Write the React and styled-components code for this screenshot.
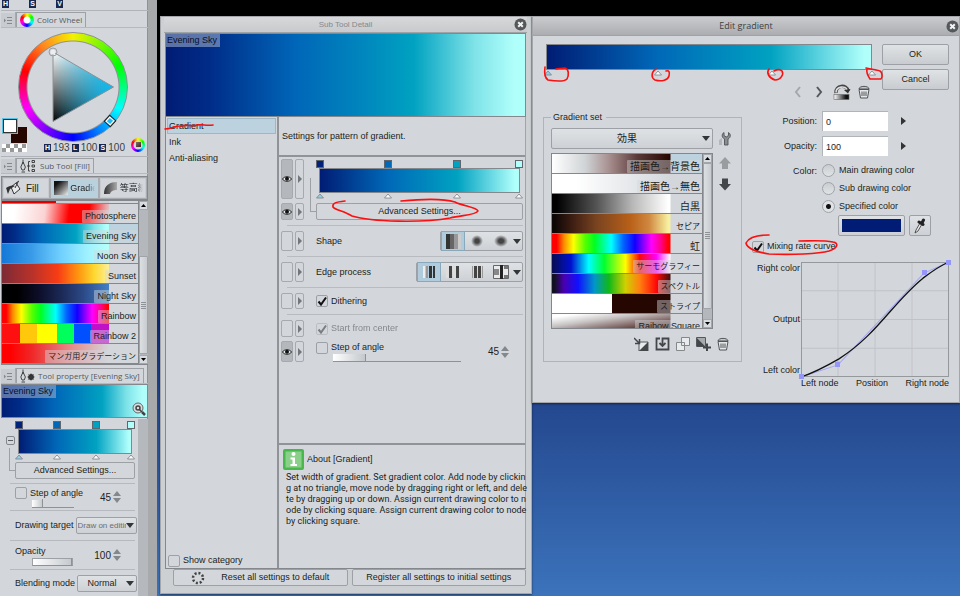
import React, { useState } from 'react';
import styled, { createGlobalStyle, css } from 'styled-components';

const SKY = 'linear-gradient(90deg, #011c74 0%, #002c88 12%, #0066b8 36%, #0087bd 55%, #00a2c1 69%, #7fe3e8 86%, #b0fffb 97%)';
const BAR_SKY = 'linear-gradient(90deg, #011c74 0%, #0068b8 34%, #00a2c1 69%, #b0fffb 98%)';
const RAINBOW = 'linear-gradient(90deg, #f00 4%, #ff8a00 10%, #ff0 18%, #5f0 28%, #0f2 36%, #0ff 50%, #06f 60%, #10f 70%, #f0f 84%, #f08 92%, #f00 98%)';

const SUB_TOOLS = [
    {name: 'Previous', fill: 'linear-gradient(90deg, #e00000 50%, #c9ccd0 50%)'},
    {name: 'Photosphere', fill: 'linear-gradient(97deg, #fff 12%, #fbd3d3 40%, #f00 62%, #f00 80%, #e6b0b4 96%, #d3d7dc 100%)'},
    {name: 'Evening Sky', fill: SKY, selected: true},
    {name: 'Noon Sky', fill: 'linear-gradient(90deg, #1478d8 0%, #3a9ce8 28%, #70d0ff 55%, #a0f2ff 80%, #b8fff8 100%)'},
    {name: 'Sunset', fill: 'linear-gradient(90deg, #7d2a35 0%, #b8322a 28%, #f83c14 52%, #ff9a10 72%, #ffd830 86%, #fbf0a0 100%)'},
    {name: 'Night Sky', fill: 'linear-gradient(90deg, #000 14%, #0d0d28 34%, #1c2a58 56%, #2c4a88 76%, #4482c8 100%)'},
    {name: 'Rainbow', fill: RAINBOW},
    {name: 'Rainbow 2', fill: 'linear-gradient(90deg, #ff1010 17%, #ffc80a 17% 33%, #ff0 33% 51%, #00ff5a 51% 67%, #0050ff 67% 83%, #c010c8 83%)'},
    {name: 'マンガ用グラデーション', size: 8, fill: 'linear-gradient(90deg, #f00 8%, #f02828 28%, #e88080 60%, #d3d7dc 100%)'},
];

const GRADIENT_SET = [
    {name: '描画色→背景色', size: 10, fill: 'linear-gradient(90deg, #fff 0%, #d0d4d6 28%, #a89090 48%, #5a3a38 72%, #260600 100%)', selected: true},
    {name: '描画色→無色', size: 10, fill: 'linear-gradient(90deg, #fff 20%, #d3d7dc 100%)'},
    {name: '白黒', size: 10, fill: 'linear-gradient(90deg, #000 4%, #555 38%, #b8b8b8 68%, #fff 98%)'},
    {name: 'セピア', size: 8, fill: 'linear-gradient(90deg, #0c0604 2%, #3a1c12 16%, #7a4420 38%, #b86018 66%, #d08840 82%, #f8f0a0 98%)'},
    {name: '虹', size: 10, fill: RAINBOW},
    {name: 'サーモグラフィー', size: 8, fill: 'linear-gradient(90deg, #080c50 0%, #0010d0 16%, #0ff 31%, #00ff30 44%, #ff0 62%, #f80808 74%, #f0f 88%, #fff 100%)'},
    {name: 'スペクトル', size: 8, fill: 'linear-gradient(90deg, #101020 2%, #4800b0 10%, #1010ff 22%, #0098c8 36%, #10b818 48%, #d0d000 62%, #ff8010 74%, #ff0808 88%, #401010 100%)'},
    {name: 'ストライプ', size: 8, fill: 'linear-gradient(90deg, #fff 51%, #260600 51%)'},
    {name: 'Raibow Square', fill: 'linear-gradient(172deg, #fff 10%, #c8c4c4 35%, #6a4a48 70%, #260600 100%)'},
];

const GlobalStyle = createGlobalStyle`
  * { box-sizing: border-box; }
  body {
    margin: 0;
    color: #1c1e20;
    font: 9px/13px "Liberation Sans", "Noto Sans CJK JP", sans-serif;
  }
  button, input, select { font: inherit; color: inherit; margin: 0; padding: 0; }
  svg { display: block; }
`;

const Desktop = styled.main`
  display: flex;
  align-items: flex-start;
  min-height: 100vh;
  overflow: hidden;
  background: linear-gradient(#000 0 60px, #02052a 200px, #10307a 340px, #23478e 400px, #3c74bc 600px);
`;

const raised = css`
  border: 1px solid #9da1a6;
  border-radius: 2px;
  background: linear-gradient(#dfe2e5, #cdd1d5);
`;

const Button = styled.button`
  ${raised}
  display: flex;
  align-items: center;
  justify-content: center;
  gap: 16px;
  width: 100%;
  height: ${p => p.$height || 17}px;
  background: ${p => p.$flat ? '#d3d7dc' : 'linear-gradient(#e0e3e5, #c8ccd0)'};
  white-space: nowrap;
`;

const IconButton = styled.button`
  display: flex;
  align-items: center;
  justify-content: center;
  border: 0;
  background: none;
`;

/* ---------- small controls ---------- */

const TickHolder = styled.span`
  display: inline-grid;
  flex: none;
  > * { grid-area: 1 / 1; }
  > svg { pointer-events: none; }
`;

const Box = styled.input`
  appearance: none;
  width: 12px;
  height: 12px;
  border: 1px solid #9da1a6;
  border-radius: 2px;
  background: #d3d7dc;
`;

const CheckLabel = styled.label`
  display: flex;
  align-items: center;
  gap: 3px;
  white-space: nowrap;
  opacity: ${p => p.$faded ? 0.45 : 1};
`;

function Check({label, initial = false, disabled}) {
    const [on, setOn] = useState(initial);
    return (
        <CheckLabel $faded={disabled}>
            <TickHolder>
                <Box type="checkbox" checked={on} disabled={disabled} onChange={() => setOn(!on)} />
                {on ? <svg width="12" height="12" viewBox="0 0 12 12"><path d="M2.5 6.5 L5 9.5 L10 2.5" fill="none" stroke="#111" strokeWidth="2" /></svg> : null}
            </TickHolder>
            {label}
        </CheckLabel>
    );
}

const Radio = styled.input`
  appearance: none;
  width: 13px;
  height: 13px;
  border: 1px solid #a0a4a8;
  border-radius: 50%;
  background: linear-gradient(#c9cdd1, #e0e3e6);
  &:checked {
    background: radial-gradient(circle, #111 0 2px, #dfe2e5 3px);
  }
`;

const SelectHolder = styled.span`
  display: grid;
  align-items: center;
  flex: ${p => p.$width ? `0 0 ${p.$width}px` : '1 1 0'};
  min-width: 0;
  > * { grid-area: 1 / 1; }
  &::after {
    content: "";
    grid-area: 1 / 1;
    justify-self: end;
    margin-right: 3px;
    border: 4px solid transparent;
    border-top: 5px solid #333638;
    border-bottom: 0;
    pointer-events: none;
  }
`;

const Select = styled.select`
  ${raised}
  appearance: none;
  width: 100%;
  height: ${p => p.$height || 17}px;
  padding: 0 12px 0 2px;
  font-size: ${p => p.$size || 9}px;
  text-align: center;
  text-align-last: center;
  ${p => p.$fade && css`
    padding: 0 10px 0 1px;
    text-align-last: left;
    color: #6a6e72;
  `}
`;

const Range = styled.input`
  appearance: none;
  display: block;
  flex: none;
  width: ${p => p.$width}px;
  height: 8px;
  background: linear-gradient(90deg, #fff, #c4c8cc) no-repeat left / ${p => p.$fill}% 100%;
  border: ${p => p.$fill === 100 ? '1px solid #9da1a6' : '0'};
  border-bottom: 1px solid #8e9296;
  &::-webkit-slider-thumb {
    appearance: none;
    width: 1px;
    height: 8px;
    background: #8e9296;
  }
`;

const SpinValue = styled.span`
  display: flex;
  align-items: center;
  gap: 2px;
  font-size: 10px;
`;

function Spin({value}) {
    return (
        <SpinValue>
            {value}
            <svg width="8" height="12" viewBox="0 0 8 12" fill="#84888c"><path d="M0 5 L4 0 L8 5Z M0 7 L4 12 L8 7Z" /></svg>
        </SpinValue>
    );
}

const StopTrack = styled.div`
  flex: 1;
  min-width: 0;
`;

const Stops = styled.div`
  display: grid;
  grid-template-columns: 34fr 35fr 31fr 8px;
  margin: ${p => p.$wide ? '0 -4px 0 -2px' : '0'};
`;

const StopSquare = styled.button`
  width: 8px;
  height: 8px;
  border: 1px solid #60666c;
  background: ${p => p.$color};
`;

const StopBar = styled.div`
  height: ${p => p.$height}px;
  margin: ${p => p.$wide ? '0' : '0 3px'};
  border: 1px solid #84888c;
  background: ${BAR_SKY};
`;

function GradientTrack({height = 25, squares = true}) {
    return (
        <StopTrack>
            {squares ? (
                <Stops>
                    {['#00227a', '#0068b8', '#00a2c1', '#b0fffb'].map(c => <StopSquare key={c} $color={c} aria-label={`Node ${c}`} />)}
                </Stops>
            ) : null}
            <StopBar $height={height} $wide={!squares} />
            <Stops $wide={!squares}>
                {[0, 1, 2, 3].map(n => (
                    <svg key={n} width="8" height="6" viewBox="0 0 8 6">
                        <path d="M.5 5 L4 1 L7.500 5Z" fill={n ? '#fff' : '#8fd0ea'} stroke="#84888c" strokeWidth="0.900" />
                    </svg>
                ))}
            </Stops>
        </StopTrack>
    );
}

/* ---------- gradient lists ---------- */

const ListHolder = styled.div`
  display: flex;
  flex: none;
  height: ${p => p.$height}px;
  border: solid #84888c;
  border-width: ${p => p.$framed ? '1px' : '1px 0 1px 1px'};
`;

const List = styled.div`
  display: flex;
  flex: 1;
  flex-direction: column;
  justify-content: ${p => p.$toEnd ? 'flex-end' : 'flex-start'};
  min-width: 0;
  overflow: hidden;
`;

const ListRow = styled.button`
  display: flex;
  flex: none;
  align-items: flex-end;
  justify-content: flex-end;
  height: 20px;
  border: 0;
  border-bottom: 1px solid #84888c;
  background: ${p => p.$fill};
  background-size: 79% 100%;
  background-repeat: no-repeat;
  background-color: ${p => p.$selected ? '#bcd2de' : '#d3d7dc'};
  font-size: ${p => p.$size || 9}px;
  > span {
    padding: 0 2px 0 3px;
    border-radius: 1px;
    background: rgba(211, 215, 220, 0.45);
    white-space: nowrap;
  }
`;

const ScrollTrack = styled.div`
  display: flex;
  flex: 0 0 10px;
  flex-direction: column;
  border-left: 1px solid #84888c;
  background: #b4b8bc;
`;

const ScrollEnd = styled.button`
  display: grid;
  place-items: center;
  flex: 0 0 9px;
  border: 1px solid #a4a8ac;
  background: #d8dbdf;
`;

const ScrollThumb = styled.div`
  display: grid;
  place-items: center;
  flex: ${p => p.$size} 0 0;
  border: 1px solid #a0a4a8;
  border-radius: 1px;
  background: linear-gradient(90deg, #dcdfe2, #c8ccd0);
`;

const ScrollGap = styled.div`
  flex: ${p => p.$size} 0 0;
`;

function Scroller({before, thumb, after}) {
    return (
        <ScrollTrack>
            <ScrollEnd aria-label="Scroll up"><svg width="5" height="3" viewBox="0 0 5 3"><path d="M0 3 L2.5 0 L5 3Z" /></svg></ScrollEnd>
            <ScrollGap $size={before} />
            <ScrollThumb $size={thumb}>
                <svg width="5" height="7" viewBox="0 0 5 7" stroke="#8e9296"><path d="M0 .5 H5 M0 2.5 H5 M0 4.5 H5 M0 6.5 H5" /></svg>
            </ScrollThumb>
            <ScrollGap $size={after} />
            <ScrollEnd aria-label="Scroll down"><svg width="5" height="3" viewBox="0 0 5 3"><path d="M0 0 L2.5 3 L5 0Z" /></svg></ScrollEnd>
        </ScrollTrack>
    );
}

function Rows({items, toEnd}) {
    return (
        <List $toEnd={toEnd}>
            {items.map(item => (
                <ListRow key={item.name} $fill={item.fill} $selected={item.selected} $size={item.size} aria-label={item.name}>
                    {item.name === 'Previous' ? null : <span>{item.name}</span>}
                </ListRow>
            ))}
        </List>
    );
}

/* ---------- dock on the left ---------- */

const Dock = styled.aside`
  display: flex;
  flex: 0 0 157px;
  flex-direction: column;
  align-self: stretch;
  height: 100vh;
  overflow: hidden;
  padding-left: 1px;
  border-right: 9px solid #a8a9ab;
  background: #d3d7dc;
  box-shadow: inset -1px 0 #8e9296;
`;

const HsvStrip = styled.div`
  display: flex;
  flex: none;
  gap: 20px;
  height: 11px;
  padding: 0 1px;
  border-bottom: 1px solid #b0b4b8;
`;

const Glyph = styled.span`
  display: grid;
  place-items: center;
  width: 7px;
  height: 8px;
  background: #1a2850;
  color: #fff;
  font: bold 7px/8px "Liberation Sans", sans-serif;
`;

const TabStrip = styled.div`
  display: flex;
  flex: none;
  align-items: flex-end;
  height: 16px;
  margin-top: ${p => p.$top || 1}px;
  padding-left: 15px;
  border-bottom: 1px solid #b6babe;
  background: linear-gradient(90deg, transparent 0 14px, #a6aaae 14px 15px, transparent 15px);
`;

const MenuMark = styled.button`
  width: 14px;
  height: 14px;
  margin-left: -15px;
  margin-right: 1px;
  border: 0;
  background: #c8ccd0;
  > svg { margin: auto; }
`;

const Tab = styled.div`
  display: flex;
  align-items: center;
  gap: 3px;
  height: 15px;
  padding: 0 3px;
  border: solid #9da1a6;
  border-width: 1px 1px 0;
  color: #55595d;
  font: 8px/10px "Open Sans", sans-serif;
  white-space: nowrap;
`;

function PanelTab({icon, children, top}) {
    return (
        <TabStrip $top={top}>
            <MenuMark aria-label="Palette menu">
                <svg width="8" height="7" viewBox="0 0 8 7" stroke="#85898d" fill="#85898d"><path d="M3 .5 H8 M3 3.5 H8 M3 6.5 H8" /><path d="M0 1.5 L2 3.5 L0 5.5Z" stroke="none" /></svg>
            </MenuMark>
            <Tab>{icon}{children}</Tab>
        </TabStrip>
    );
}

const HueDisc = styled.span`
  width: 14px;
  height: 14px;
  border-radius: 50%;
  background:
    radial-gradient(circle, #fff 0 3px, transparent 4px),
    conic-gradient(#ff0, #0f0, #0ff, #00f, #f0f, #f00, #ff0);
`;

const HueRing = styled(HueDisc)`
  display: grid;
  place-items: center;
  background:
    radial-gradient(circle, #d3d7dc 0 4px, transparent 5px),
    conic-gradient(#ff0, #0f0, #0ff, #00f, #f0f, #f00, #ff0);
  &::after {
    content: "";
    width: 5px;
    height: 5px;
    background: linear-gradient(135deg, #777, #501818);
  }
`;

const WheelArea = styled.section`
  position: relative;
  flex: none;
  padding: 4px 3px 3px 0;
  border-bottom: 1px solid #b0b4b8;
`;

const Wheel = styled.div`
  display: grid;
  width: 110px;
  height: 110px;
  margin: 0 auto;
  border: 1px solid #8e9296;
  border-radius: 50%;
  background:
    radial-gradient(circle, #d3d7dc 0 45px, #8e9296 46px, transparent 47px),
    conic-gradient(#f5f000, #0f0 65deg, #0ff 115deg, #0080ff 150deg, #00f 180deg, #f0f 245deg, #f00 288deg, #ff8a20 325deg, #f5f000);
`;

const Swatches = styled.div`
  position: absolute;
  left: 1px;
  bottom: 2px;
`;

const Readout = styled.div`
  display: flex;
  align-items: center;
  justify-content: flex-end;
  gap: 2px;
  height: 11px;
  color: #3a3e42;
  font-size: 10px;
  > ${HueRing} { margin: -6px 0 0 4px; }
`;

function ColorWheel() {
    return (
        <WheelArea>
            <Wheel>
                <svg width="108" height="108" viewBox="20 32 108 108">
                    <defs>
                        <linearGradient id="shade" x1="0" y1="0" x2="0" y2="1">
                            <stop offset="0" stopColor="#fff" />
                            <stop offset="1" stopColor="#000" />
                        </linearGradient>
                        <linearGradient id="hue">
                            <stop offset="0" stopColor="#08bcf4" stopOpacity="0" />
                            <stop offset="1" stopColor="#08bcf4" />
                        </linearGradient>
                    </defs>
                    <path d="M54 51 L114.500 86 L54 120.500Z" fill="url(#shade)" />
                    <path d="M54 51 L114.500 86 L54 120.500Z" fill="url(#hue)" stroke="#8e9296" />
                    <circle cx="54" cy="51" r="4" fill="none" stroke="#999da1" />
                    <circle cx="54" cy="51" r="2.500" fill="#eee" />
                    <rect x="107" y="116" width="8" height="8" transform="rotate(42 111 120)" fill="#22b8f0" stroke="#222" strokeWidth="1.200" />
                    <rect x="108.200" y="117.200" width="5.600" height="5.600" transform="rotate(42 111 120)" fill="none" stroke="#fff" strokeWidth="1.200" />
                </svg>
            </Wheel>
            <Readout>
                <Glyph>H</Glyph>193 <Glyph>L</Glyph>100 <Glyph>S</Glyph>100
                <HueRing />
            </Readout>
            <Swatches>
                <svg width="26" height="36" viewBox="0 0 26 36">
                    <rect x="9" y="9" width="16" height="16" fill="#260600" />
                    <rect x="0" y="0" width="16" height="16" fill="#58c0e0" />
                    <rect x="1.500" y="1.500" width="13" height="13" fill="#fff" stroke="#333" />
                    <rect x="0" y="26" width="25" height="8" fill="#fff" />
                    <path d="M4 26h4v4h-4z M12 26h4v4h-4z M20 26h4v4h-4z M0 30h4v4h-4z M8 30h4v4h-4z M16 30h4v4h-4z" fill="#999" />
                </svg>
            </Swatches>
        </WheelArea>
    );
}

const GroupRow = styled.div`
  display: grid;
  flex: none;
  grid-template-columns: repeat(3, 1fr);
  gap: 2px;
  margin: 2px 0 0;
  padding: 1px;
  border: 1px solid #84888c;
  background: #a8acb0;
`;

const GroupButton = styled.button`
  display: flex;
  align-items: center;
  gap: ${p => p.$clip ? 2 : 4}px;
  height: 20px;
  padding: 0 2px;
  overflow: hidden;
  border: 1px solid #c8ccd0;
  background: ${p => p.$active ? '#b9d0dd' : '#d3d7dc'};
  font-size: ${p => p.$clip ? 9 : 10}px;
  white-space: nowrap;
  > svg { flex: none; }
  > span {
    overflow: hidden;
    mask-image: ${p => p.$clip ? 'linear-gradient(90deg, #000 70%, transparent)' : 'none'};
  }
`;

const BrushIcon = ({gear}) => (
    <svg width={gear ? 15 : 17} height="14" viewBox={gear ? '0 0 15 14' : '0 0 17 14'} fill="none" stroke="#333">
        <path d="M3 .5 V5 M3 3 L.8 8 L2 11 H4.200 L5.400 8Z M1.500 13 H5" strokeWidth="0.900" />
        {gear ? (
            <g><circle cx="11" cy="8" r="2" strokeWidth="1.800" /><path d="M11 4.500 V11.500 M7.500 8 H14.500 M8.500 5.500 L13.500 10.500 M13.500 5.500 L8.500 10.500" strokeWidth="0.900" /></g>
        ) : (
            <path d="M7 7 H10 M10 2.500 H8.500 V12 H10 M12 1.500 h2.500 v2 h-2.500z M12 6 h2.500 v2 h-2.500z M12 10.500 h2.500 v2 h-2.500z" strokeWidth="0.900" />
        )}
    </svg>
);

const Preview = styled.div`
  display: flex;
  flex: none;
  align-items: flex-start;
  justify-content: space-between;
  height: ${p => p.$height}px;
  border: 1px solid #84888c;
  background: ${SKY};
  > span {
    padding: 0 3px 0 1px;
    background: rgba(150, 170, 200, 0.6);
    color: #0a1028;
    font-size: 9px;
  }
  > svg { align-self: flex-end; }
`;

const PropertyArea = styled.section`
  display: flex;
  flex: 1;
  min-height: 0;
  margin-top: 1px;
  border-right: 10px solid #b5b9bd;
`;

const PropertyList = styled.div`
  flex: 1;
  min-width: 0;
  padding: 2px 3px 0 5px;
`;

const StopsRow = styled.div`
  display: flex;
  margin-bottom: 2px;
`;

const Collapse = styled.button`
  flex: 0 0 9px;
  height: 9px;
  margin-top: 15px;
  border: 1px solid #84888c;
  border-radius: 2px;
  background: linear-gradient(#5a5e62, #5a5e62) no-repeat center / 5px 1px, #d3d7dc;
`;

const AdvancedHolder = styled.div`
  position: relative;
  margin-left: ${p => p.$indent || 0}px;
  margin-bottom: ${p => p.$after || 0}px;
  &::before {
    content: "";
    position: absolute;
    left: ${p => p.$reach}px;
    bottom: 8px;
    width: 6px;
    height: ${p => p.$rise}px;
    border-left: 1px solid #9da1a6;
    border-bottom: 1px solid #9da1a6;
  }
`;

const PropertyItem = styled.div`
  display: flex;
  align-items: center;
  justify-content: space-between;
  gap: 2px;
  height: ${p => p.$height}px;
  margin-left: 4px;
  padding: 0 0 0 5px;
  border-top: 1px solid #b6babe;
  white-space: nowrap;
`;

const SliderBlock = styled.div`
  display: flex;
  flex-direction: column;
  > ${Range} { margin-left: 17px; }
`;

const SpinInset = styled.div`
  margin-right: 14px;
`;

/* ---------- floating windows ---------- */

const Window = styled.section`
  display: flex;
  flex: ${p => p.$grow} 1 0;
  flex-direction: column;
  align-self: ${p => p.$tall ? 'stretch' : 'flex-start'};
  min-width: 0;
  margin-top: 16px;
  margin-left: ${p => p.$gap || 0}px;
  margin-bottom: 2px;
  padding: ${p => p.$tall ? '0 5px 7px 4px' : '0 1px 12px'};
  border: 1px solid #a4a6a9;
  background: ${p => p.$tall ? '#cdd0d3' : '#d3d7dc'};
  box-shadow: 0 1px 2px rgba(0, 0, 0, 0.5);
`;

const TitleBar = styled.header`
  display: grid;
  grid-template-columns: 14px 1fr 14px;
  align-items: center;
  flex: none;
  height: ${p => p.$height}px;
  margin: 0 -1px;
  border-bottom: 1px solid #a0a3a6;
  background: ${p => p.$strong ? 'linear-gradient(#c9cbcd, #abadb0)' : 'linear-gradient(#d6d8da, #c8cacd)'};
  color: ${p => p.$strong ? '#3c4044' : '#85898d'};
  font: ${p => p.$strong ? '9px/12px "Open Sans"' : '8px/12px "Liberation Sans"'}, sans-serif;
  text-align: center;
  > span { grid-column: 2; }
`;

const CloseIcon = () => (
    <IconButton aria-label="Close">
        <svg width="13" height="13" viewBox="0 0 13 13"><circle cx="6.500" cy="6.500" r="6" fill="#55585b" /><path d="M4.200 4.200 L8.800 8.800 M8.800 4.200 L4.200 8.800" stroke="#f2f2f2" strokeWidth="2" /></svg>
    </IconButton>
);

const DetailBody = styled.div`
  display: flex;
  flex: 1;
  min-height: 0;
  border: solid #84888c;
  border-width: 0 0 1px 1px;
  background: #d3d7dc;
`;

const Categories = styled.nav`
  display: flex;
  flex: 0 0 113px;
  flex-direction: column;
  padding: 1px;
  border-right: 2px solid #909498;
  > label { margin-top: auto; padding-left: 1px; }
`;

const Category = styled.button`
  position: relative;
  height: 16px;
  padding: 0 0 0 1px;
  border: 1px solid ${p => p.$active ? '#9cb8c8' : 'transparent'};
  background: ${p => p.$active ? '#bcd2de' : 'none'};
  text-align: left;
`;

const DetailMain = styled.div`
  display: flex;
  flex: 1;
  flex-direction: column;
  min-width: 0;
  border-right: 1px solid #a0a4a8;
`;

const Description = styled.p`
  flex: none;
  height: 38px;
  margin: 0;
  padding: 13px 3px 0;
`;

const Settings = styled.div`
  display: flex;
  flex: 1;
  flex-direction: column;
  padding: 2px;
  border-top: 2px solid #909498;
  border-bottom: 2px solid #909498;
`;

const SettingRow = styled.div`
  display: grid;
  grid-template-columns: 12px 9px 1fr;
  flex: none;
  gap: 0 2px;
  height: ${p => p.$height}px;
  margin-bottom: ${p => p.$after || 0}px;
`;

const Toggle = styled.button`
  display: grid;
  place-items: center;
  border: 1px solid #a6aaae;
  border-radius: 2px;
  background: ${p => p.$on ? '#b4b8bc' : '#d3d7dc'};
`;

const SettingContent = styled.div`
  display: flex;
  align-items: center;
  justify-content: space-between;
  min-width: 0;
  padding-left: 10px;
  > ${AdvancedHolder} { flex: 1; }
  > ${SliderBlock} { align-self: flex-start; }
`;

const Rule = styled.hr`
  flex: none;
  width: calc(100% - 6px);
  margin: 5px 0 5px 6px;
  border: 0;
  border-top: 1px solid #b8bcc0;
`;

const Choices = styled.div`
  ${raised}
  display: flex;
  align-items: center;
  height: 20px;
  padding-right: 1px;
`;

const Choice = styled.button`
  display: grid;
  place-items: center;
  width: 24px;
  height: 20px;
  border: ${p => p.$active ? '1px solid #88a8bc' : '0'};
  background: ${p => p.$active ? '#b0ccdc' : 'none'};
`;

const Eye = () => (
    <svg width="10" height="8" viewBox="0 0 10 8"><path d="M.5 4 C2 1 8 1 9.500 4 C8 7 2 7 .5 4Z" fill="#e8eaec" stroke="#222" /><circle cx="5" cy="3.800" r="2" fill="#111" /></svg>
);

const DownTriangle = () => (
    <svg width="8" height="5" viewBox="0 0 8 5"><path d="M0 0 H8 L4 5Z" fill="#333638" /></svg>
);

function Setting({height, after, on, children}) {
    return (
        <SettingRow $height={height} $after={after}>
            <Toggle $on={on} aria-label="Show in palette">{on ? <Eye /> : null}</Toggle>
            <Toggle aria-label="Menu"><svg width="4" height="8" viewBox="0 0 4 8"><path d="M0 0 L4 4 L0 8Z" fill="#73777b" /></svg></Toggle>
            <SettingContent>{children}</SettingContent>
        </SettingRow>
    );
}

const About = styled.section`
  flex: 0 0 123px;
  padding: 4px 1px 0 6px;
  > header {
    display: flex;
    align-items: center;
    gap: 3px;
    margin-left: -2px;
  }
  > p {
    margin: 2px 0 0 1px;
    font: 9px/11px Roboto, sans-serif;
    white-space: nowrap;
  }
`;

const Footer = styled.footer`
  display: grid;
  flex: none;
  grid-template-columns: 1fr 1fr;
  gap: 4px;
  padding: 0 0 0 8px;
`;

/* red pen strokes drawn over a control */
const Pen = styled.svg`
  position: absolute;
  z-index: 2;
  left: ${p => p.$x}px;
  top: ${p => p.$y}px;
  overflow: visible;
  fill: none;
  stroke: #fa1010;
  stroke-width: 1.6;
  stroke-linecap: round;
  stroke-linejoin: round;
  pointer-events: none;
`;

function SubToolDetail() {
    return (
        <Window $grow={361} $gap={3} $tall>
            <TitleBar $height={16}><span>Sub Tool Detail</span><CloseIcon /></TitleBar>
            <Preview $height={84}><span>Evening Sky</span></Preview>
            <DetailBody>
                <Categories>
                    <Category $active>
                        Gradient
                        <Pen $x={-3} $y={3} width="50" height="10"><path d="M0 7 C6 7 9 4 15 4 C22 2 26 5 32 3 C38 2 40 4 48 3" /></Pen>
                    </Category>
                    <Category>Ink</Category>
                    <Category>Anti-aliasing</Category>
                    <Check label="Show category" />
                </Categories>
                <DetailMain>
                    <Description>Settings for pattern of gradient.</Description>
                    <Settings>
                        <Setting height={40} after={4} on><GradientTrack /></Setting>
                        <Setting height={17} on>
                            <AdvancedHolder $reach={-6} $rise={33}>
                                <Button $flat>Advanced Settings...</Button>
                                <Pen $x={16} $y={-4} width="150" height="28"><path d="M13 2 C4 3 0 4 1 8 C3 11 12 12 20 17 C40 23 90 24 118 19 C130 16 144 16 146 12 C145 8 130 7 123 3 C110 -1 90 0 69 2" /></Pen>
                            </AdvancedHolder>
                        </Setting>
                        <Rule />
                        <Setting height={20}>
                            Shape
                            <Choices>
                                <Choice $active aria-label="Straight line"><svg width="15" height="15"><path d="M0 0h4v15h-4z" fill="#333" /><path d="M4 0h4v15h-4z" fill="#666" /><path d="M8 0h4v15h-4z" fill="#999" /><path d="M12 0h3v15h-3z" fill="#ccc" /></svg></Choice>
                                <Choice aria-label="Circle"><svg width="12" height="12"><defs><radialGradient id="dot"><stop offset=".35" stopColor="#444" /><stop offset="1" stopColor="#444" stopOpacity="0" /></radialGradient></defs><circle cx="6" cy="6" r="6" fill="url(#dot)" /></svg></Choice>
                                <Choice aria-label="Ellipse"><svg width="14" height="12"><ellipse cx="7" cy="6" rx="7" ry="6" fill="url(#dot)" /></svg></Choice>
                                <DownTriangle />
                            </Choices>
                        </Setting>
                        <Rule />
                        <Setting height={20}>
                            Edge process
                            <Choices>
                                <Choice $active aria-label="Do not repeat"><svg width="14" height="12"><path d="M1 0h2v12h-2z" fill="#eee" /><path d="M4 0h2v12h-2z" fill="#999" /><path d="M7 0h3v12h-3z M11 0h2v12h-2z" fill="#333" /></svg></Choice>
                                <Choice aria-label="Repeat"><svg width="14" height="12"><path d="M3 0h3v12h-3z M10 0h3v12h-3z" fill="#444" /><path d="M0 0h3v12h-3z M7 0h3v12h-3z" fill="#ddd" /></svg></Choice>
                                <Choice aria-label="Reverse"><svg width="14" height="12"><path d="M4 0h3v12h-3z M8 0h3v12h-3z" fill="#444" /><path d="M2 0h1v12h-1z M12 0h1v12h-1z" fill="#999" /></svg></Choice>
                                <Choice aria-label="Do not draw"><svg width="16" height="14"><path d="M.5 .5h15v13h-15z" fill="#e8eaec" stroke="#666" /><path d="M1 4h5v6h-5z" fill="#888" /><path d="M7 0h3v14h-3z" fill="#222" /><path d="M11 1h4v3h-4z M11 10h4v3h-4z" fill="#777" /></svg></Choice>
                                <DownTriangle />
                            </Choices>
                        </Setting>
                        <Rule />
                        <Setting height={16}><Check label="Dithering" initial /></Setting>
                        <Rule />
                        <Setting height={17} after={4}><Check label="Start from center" initial disabled /></Setting>
                        <Setting height={21} on>
                            <SliderBlock>
                                <Check label="Step of angle" />
                                <Range type="range" aria-label="Step of angle" $width={128} $fill={25} min="0" max="180" defaultValue="45" />
                            </SliderBlock>
                            <SpinInset><Spin value="45" /></SpinInset>
                        </Setting>
                    </Settings>
                    <About>
                        <header>
                            <svg width="21" height="21" viewBox="0 0 21 21"><rect width="21" height="21" rx="2" fill="#48b84c" /><rect x="2.500" y="2.500" width="16" height="16" fill="#8ad08a" /><circle cx="10.500" cy="5" r="2" fill="#fff" /><path d="M7.500 8.500 H12 V15 H14 V17 H7.500 V15 H9.500 V10.500 H7.500Z" fill="#fff" /></svg>
                            About [Gradient]
                        </header>
                        <p>
                            Set width of gradient. Set gradient color. Add node by clickin<br />
                            g at no triangle, move node by dragging right or left, and dele<br />
                            te by dragging up or down. Assign current drawing color to n<br />
                            ode by clicking square. Assign current drawing color to node<br />
                            by clicking square.
                        </p>
                    </About>
                </DetailMain>
            </DetailBody>
            <Footer>
                <Button $flat>
                    <svg width="14" height="14" viewBox="0 0 14 14"><circle cx="7" cy="7" r="5" fill="none" stroke="#444" strokeWidth="2.500" strokeDasharray="2 1.900" /></svg>
                    Reset all settings to default
                </Button>
                <Button $flat>Register all settings to initial settings</Button>
            </Footer>
        </Window>
    );
}

/* ---------- edit gradient dialog ---------- */

const DialogTop = styled.div`
  display: grid;
  grid-template-columns: 1fr 67px;
  gap: 10px;
  padding: 8px 9px 0 12px;
`;

const DialogButtons = styled.div`
  display: grid;
  align-content: start;
  gap: 4px;
  font-size: 9px;
`;

const TrackHolder = styled.div`
  position: relative;
`;

const StopTools = styled.div`
  display: flex;
  align-items: center;
  justify-content: flex-end;
  gap: 7px;
  height: 16px;
  margin-top: 8px;
  padding-right: 2px;
`;

const DialogBody = styled.div`
  display: grid;
  grid-template-columns: 200fr 199fr;
  gap: 9px;
  padding: 11px 9px 0;
`;

const Group = styled.fieldset`
  min-width: 0;
  margin: 0;
  align-self: start;
  padding: 4px 9px 10px 7px;
  border: 1px solid #b0b4b8;
  > legend { padding: 0 4px 0 2px; }
`;

const GroupGrid = styled.div`
  display: grid;
  grid-template-columns: 1fr 14px;
  gap: 4px 5px;
`;

const Movers = styled.div`
  display: flex;
  flex-direction: column;
  align-items: center;
  gap: 8px;
  padding-top: 4px;
`;

const SetTools = styled.div`
  display: flex;
  justify-content: flex-end;
  gap: 6px;
  margin-top: 8px;
  padding-right: 3px;
`;

const NodeForm = styled.div`
  display: grid;
  grid-template-columns: 66px 1fr;
  gap: 5px;
`;

const FieldLabel = styled.label`
  align-self: start;
  padding-top: 4px;
  text-align: right;
`;

const FieldLine = styled.div`
  display: flex;
  align-items: center;
  gap: 13px;
`;

const Field = styled.input`
  width: 66px;
  height: 20px;
  padding: 0 3px;
  border: solid #b0b4b8;
  border-width: 1px 0 0 1px;
  background: #fff;
`;

const RadioLabel = styled.label`
  display: flex;
  align-items: center;
  gap: 4px;
  height: 18px;
  white-space: nowrap;
`;

const ColorLine = styled.div`
  display: flex;
  gap: 4px;
  margin-left: 16px;
`;

const ColorButton = styled.button`
  ${raised}
  width: ${p => p.$width}px;
  height: 21px;
  padding: 3px;
  > svg { margin: -1px auto; }
`;

const ColorFill = styled.span`
  display: block;
  height: 13px;
  background: #001c74;
`;

const MixLine = styled.div`
  position: relative;
  margin: 4px 0 9px 1px;
`;

const CurveGrid = styled.div`
  display: grid;
  grid-template-columns: 50px 1fr;
`;

const CurveSide = styled.div`
  display: flex;
  flex-direction: column;
  justify-content: space-between;
  padding-right: 1px;
  text-align: right;
  white-space: nowrap;
`;

const CurveFoot = styled.div`
  display: flex;
  grid-column: 2;
  justify-content: space-between;
`;

const Curve = styled.svg`
  width: 100%;
  height: 115px;
  overflow: visible;
`;

const Trash = () => (
    <svg width="12" height="14" viewBox="0 0 12 14" fill="none" stroke="#505458"><path d="M1 4.500 H11 L9.500 13 H2.500Z M4 6.500 V11 M6 6.500 V11 M8 6.500 V11" fill="#e4e6e8" /><path d="M1 4 C1 .5 11 .5 11 4Z" fill="#c4c7ca" /></svg>
);

const RightTriangle = () => (
    <svg width="5" height="8" viewBox="0 0 5 8"><path d="M0 0 L5 4 L0 8Z" fill="#333" /></svg>
);

function GradientSet() {
    return (
        <Group>
            <legend>Gradient set</legend>
            <GroupGrid>
                <SelectHolder>
                    <Select $height={21} $size={10} aria-label="Gradient set" defaultValue="効果"><option>効果</option></Select>
                </SelectHolder>
                <IconButton aria-label="Set options">
                    <svg width="14" height="15" viewBox="0 0 14 15"><path d="M6 1.500 C3.500 3 3.500 6.500 6.500 8 V14 H10 V8 C13 6.500 13 3 10.500 1.500 V4.500 L8.200 6 L6 4.500Z" fill="#8a8d90" stroke="#505356" strokeWidth="0.900" /><path d="M1 9 L4 7 V14 H1Z" fill="#b4b8bc" /></svg>
                </IconButton>
                <ListHolder $height={176} $framed>
                    <Rows items={GRADIENT_SET} />
                    <Scroller before={0} thumb={14} after={1} />
                </ListHolder>
                <Movers>
                    <IconButton aria-label="Move up"><svg width="12" height="13" viewBox="0 0 12 13"><path d="M6 0 L12 6.500 H9 V12 H3 V6.500 H0Z" fill="#9a9da0" /></svg></IconButton>
                    <IconButton aria-label="Move down"><svg width="12" height="13" viewBox="0 0 12 13"><path d="M6 12.500 L12 6 H9 V.5 H3 V6 H0Z" fill="#44474a" /></svg></IconButton>
                </Movers>
            </GroupGrid>
            <SetTools>
                <IconButton aria-label="Replace"><svg width="15" height="14" viewBox="0 0 15 14"><path d="M5 5h9v9h-9z" fill="#e8eaec" stroke="#55585b" /><path d="M5 14 L14 5 V14Z" fill="#44474a" /><path d="M0 1 L5 6 M5.500 2 V6.500 H1" stroke="#44474a" strokeWidth="1.500" fill="none" /></svg></IconButton>
                <IconButton aria-label="Import"><svg width="15" height="14" viewBox="0 0 15 14" fill="none" stroke="#44474a" strokeWidth="1.800"><path d="M5 1.500 H1.500 V12.500 H13.500 V1.500 H7.500 V8.500 M4.500 6 L7.500 9 L10.500 6" /></svg></IconButton>
                <IconButton aria-label="Duplicate"><svg width="14" height="14" viewBox="0 0 14 14" fill="#e8eaec" stroke="#85888b"><path d="M5.500 .5h8v8h-8z M.5 5.500h8v8h-8z" /></svg></IconButton>
                <IconButton aria-label="Add"><svg width="15" height="14" viewBox="0 0 15 14"><path d="M.5 .5h9v9h-9z" fill="#e8eaec" stroke="#55585b" /><path d="M1 1 L9 9 V1Z" fill="#a8abae" /><path d="M1 1 L9.500 9.500 H1Z" fill="#44474a" /><path d="M11 6.500 V14 M7 10.500 H15" stroke="#44474a" strokeWidth="2" /></svg></IconButton>
                <IconButton aria-label="Delete"><Trash /></IconButton>
            </SetTools>
        </Group>
    );
}

function EditGradient() {
    return (
        <Window $grow={424}>
            <TitleBar $height={19} $strong><span>Edit gradient</span><CloseIcon /></TitleBar>
            <DialogTop>
                <TrackHolder>
                    <GradientTrack height={26} squares={false} />
                    <Pen $x={0} $y={23} width="330" height="14">
                        <path d="M-1 0 C-2 7 -1 11 2 13 C8 14 18 15 21 12 C23 8 23 2 19 1 C15 2 12 1 10 2" />
                        <path d="M110 2 C105 5 105 11 109 13 C116 15 122 13 123 9 C124 5 123 3 120 4" />
                        <path d="M223 2 C220 6 223 11 229 13 C235 13 238 7 236 4 C234 2 230 3 228 4" />
                        <path d="M321 2 C320 6 322 9 324 12 L335 12 C337 10 336 5 334 4 C331 3 324 2 320 1" />
                    </Pen>
                    <StopTools>
                        <IconButton aria-label="Previous node"><svg width="14" height="12" viewBox="0 0 14 12"><path d="M9 1 L5 6 L9 11" fill="none" stroke="#a4a8ac" strokeWidth="2" /></svg></IconButton>
                        <IconButton aria-label="Next node"><svg width="14" height="12" viewBox="0 0 14 12"><path d="M5 1 L9 6 L5 11" fill="none" stroke="#55585b" strokeWidth="2" /></svg></IconButton>
                        <IconButton aria-label="Reverse gradient"><svg width="18" height="16" viewBox="0 0 18 16"><defs><linearGradient id="flip"><stop offset="0" stopColor="#fff" /><stop offset=".8" stopColor="#111" /></linearGradient></defs><path d="M3 9 C2 1 14 0 15 7" fill="none" stroke="#444" strokeWidth="3.500" /><path d="M3 8.500 C3 2 13 1.500 14 6" fill="none" stroke="#ddd" strokeWidth="1.600" /><path d="M11 6 L17.500 5 L15 9.500Z" fill="#333" /><rect x="1" y="10.500" width="15" height="5" fill="url(#flip)" stroke="#666" strokeWidth="0.600" /></svg></IconButton>
                        <IconButton aria-label="Delete node"><Trash /></IconButton>
                    </StopTools>
                </TrackHolder>
                <DialogButtons>
                    <Button $height={21}>OK</Button>
                    <Button $height={21}>Cancel</Button>
                </DialogButtons>
            </DialogTop>
            <DialogBody>
                <GradientSet />
                <div>
                    <NodeForm>
                        <FieldLabel htmlFor="position">Position:</FieldLabel>
                        <FieldLine><Field id="position" defaultValue="0" /><RightTriangle /></FieldLine>
                        <FieldLabel htmlFor="opacity">Opacity:</FieldLabel>
                        <FieldLine><Field id="opacity" defaultValue="100" /><RightTriangle /></FieldLine>
                        <FieldLabel as="span">Color:</FieldLabel>
                        <div>
                            {['Main drawing color', 'Sub drawing color', 'Specified color'].map((label, i) => (
                                <RadioLabel key={label}><Radio type="radio" name="source" defaultChecked={i === 2} />{label}</RadioLabel>
                            ))}
                            <ColorLine>
                                <ColorButton $width={67} aria-label="Specified color"><ColorFill /></ColorButton>
                                <ColorButton $width={22} aria-label="Pick color"><svg width="12" height="16" viewBox="0 0 12 16"><path d="M1 15 L2 12 L6 5 L8 6 L4 13Z" fill="#e8eaec" stroke="#444" strokeWidth="0.900" /><path d="M5 4 L9 6.500 M8 5 L9.500 2" stroke="#222" strokeWidth="3" strokeLinecap="round" /></svg></ColorButton>
                            </ColorLine>
                        </div>
                    </NodeForm>
                    <MixLine>
                        <Check label="Mixing rate curve" initial />
                        <Pen $x={-7} $y={-6} width="95" height="24"><path d="M24 1 C14 1 4 3 1 9 C2 15 12 18 24 20 C46 21 74 20 84 17 C93 14 94 9 88 8 C78 6 66 7 54 7" /></Pen>
                    </MixLine>
                    <CurveGrid>
                        <CurveSide><span>Right color</span><span>Output</span><span>Left color</span></CurveSide>
                        <Curve viewBox="0 0 148 114" preserveAspectRatio="none">
                            <path d="M0 28.500 H148 M0 57 H148 M0 85.500 H148 M37 0 V114 M74 0 V114 M111 0 V114" stroke="#c0c3c6" />
                            <path d="M0 .5 H147.500 V113.500 H.5 V0" fill="none" stroke="#96999c" />
                            <path d="M0 114 L37 102 L123 11 L148 0" fill="none" stroke="#a4a6f4" />
                            <path d="M0 114 C12 110 24 104 38 96 C76 72 92 40 122 16 C130 10 138 4 148 0" fill="none" stroke="#111" strokeWidth="1.300" />
                            <path d="M-2 111h5v5h-5z M34 99h5v5h-5z M121 8h5v5h-5z M145 -2h5v5h-5z" fill="#9496f8" />
                        </Curve>
                        <CurveFoot><span>Left node</span><span>Position</span><span>Right node</span></CurveFoot>
                    </CurveGrid>
                </div>
            </DialogBody>
        </Window>
    );
}

export default function App() {
    return (
        <Desktop>
            <GlobalStyle />
            <Dock>
                <HsvStrip><Glyph>H</Glyph><Glyph>S</Glyph><Glyph>V</Glyph></HsvStrip>
                <PanelTab icon={<HueDisc />}>Color Wheel</PanelTab>
                <ColorWheel />
                <PanelTab icon={<BrushIcon />}>Sub Tool [Fill]</PanelTab>
                <GroupRow>
                    <GroupButton>
                        <svg width="16" height="16" viewBox="0 0 16 16"><path d="M5 7 L10 3 L14 9 L8 14Z" fill="#e8eaec" stroke="#333" /><path d="M10 3 L13 1 M9 8 L12 2" stroke="#333" /><path d="M0 8 C3 6 6 5 9 6 L4 9 L2 14 C1 12 1 10 0 8Z" fill="#333" /></svg>
                        <span>Fill</span>
                    </GroupButton>
                    <GroupButton $active $clip>
                        <svg width="14" height="14"><defs><linearGradient id="corner" x2="1" y2="1"><stop offset=".2" stopColor="#111" /><stop offset="1" stopColor="#eee" /></linearGradient></defs><rect width="14" height="14" fill="url(#corner)" /></svg>
                        <span>Gradient</span>
                    </GroupButton>
                    <GroupButton $clip>
                        <svg width="15" height="14"><defs><linearGradient id="fan"><stop offset="0" stopColor="#333" /><stop offset="1" stopColor="#aaa" /></linearGradient></defs><path d="M1 13 C1 4 7 1 14 1 L14 9 C10 9 8 10 7 13Z" fill="url(#fan)" /></svg>
                        <span>等高線</span>
                    </GroupButton>
                </GroupRow>
                <ListHolder $height={165}>
                    <Rows items={SUB_TOOLS} toEnd />
                    <Scroller before={47} thumb={97} after={1} />
                </ListHolder>
                <PanelTab icon={<BrushIcon gear />} top={3}>Tool property [Evening Sky]</PanelTab>
                <Preview $height={34}>
                    <span>Evening Sky</span>
                    <svg width="16" height="16" viewBox="0 0 16 16"><circle cx="7" cy="7" r="5" fill="#d8dcdf" stroke="#666" /><path d="M11 11 L14 14" stroke="#444" strokeWidth="2.500" /><circle cx="7" cy="7" r="2" fill="none" stroke="#444" strokeWidth="1.500" /><path d="M8 8 L11 11" stroke="#444" strokeWidth="1.500" /></svg>
                </Preview>
                <PropertyArea>
                    <PropertyList>
                        <StopsRow><Collapse aria-label="Collapse" /><GradientTrack /></StopsRow>
                        <AdvancedHolder $indent={9} $reach={-6} $rise={22} $after={4}>
                            <Button $flat>Advanced Settings...</Button>
                        </AdvancedHolder>
                        <PropertyItem $height={27}>
                            <SliderBlock>
                                <Check label="Step of angle" />
                                <Range type="range" aria-label="Step of angle" $width={42} $fill={25} min="0" max="180" defaultValue="45" />
                            </SliderBlock>
                            <SpinInset><Spin value="45" /></SpinInset>
                        </PropertyItem>
                        <PropertyItem $height={30}>
                            <label htmlFor="target">Drawing target</label>
                            <SelectHolder $width={61}>
                                <Select id="target" $fade $size={8}><option>Draw on editing</option></Select>
                            </SelectHolder>
                        </PropertyItem>
                        <PropertyItem $height={29}>
                            <SliderBlock>
                                <label htmlFor="layer-opacity">Opacity</label>
                                <Range id="layer-opacity" type="range" $width={41} $fill={100} defaultValue="100" />
                            </SliderBlock>
                            <SpinInset><Spin value="100" /></SpinInset>
                        </PropertyItem>
                        <PropertyItem $height={28}>
                            <label htmlFor="blend">Blending mode</label>
                            <SelectHolder $width={60}>
                                <Select id="blend"><option>Normal</option></Select>
                            </SelectHolder>
                        </PropertyItem>
                    </PropertyList>
                </PropertyArea>
            </Dock>
            <SubToolDetail />
            <EditGradient />
        </Desktop>
    );
}
